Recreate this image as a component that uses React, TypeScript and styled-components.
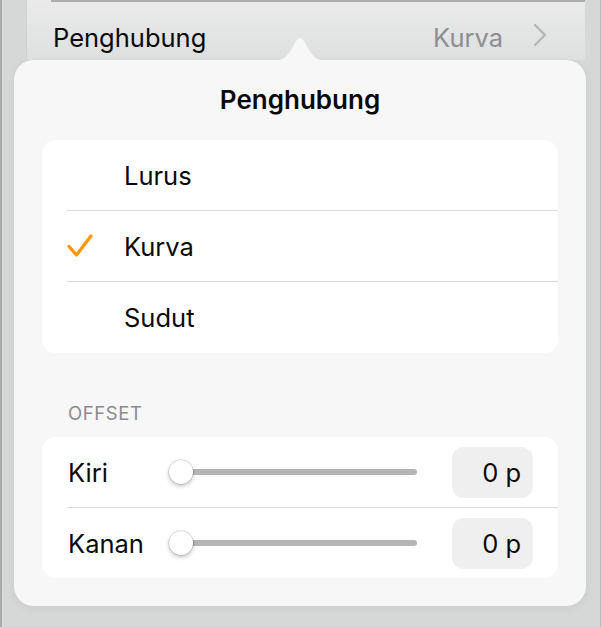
import React from "react";
import styled, { createGlobalStyle } from "styled-components";

const Global = createGlobalStyle`
  html, body { margin: 0; padding: 0; }
  body {
    background: #d6d7d7;
    font-family: Inter, "Noto Sans", Roboto, sans-serif;
    -webkit-font-smoothing: antialiased;
  }
`;

const Frame = styled.div`
  width: 601px;
  height: 627px;
  box-sizing: border-box;
  background: #d6d7d7;
  border-left: 2px solid #a9aaaa;
  border-right: 1px solid #b9baba;
  overflow: hidden;
  display: flex;
  flex-direction: column;
`;

const Sheet = styled.div`
  margin: 0 15px 0 24px;
  height: 60px;
  background: linear-gradient(#eaeaea, #dedfdf);
  border-left: 1px solid #d0d1d1;
`;

const SheetRow = styled.div`
  margin-left: 24px;
  height: 60px;
  box-sizing: border-box;
  border-top: 2px solid #acacac;
  display: flex;
  align-items: flex-start;
  padding: 21px 38px 0 2px;
  font-size: 25.5px;
  line-height: 30px;
`;

const RowLabel = styled.span`
  flex: 1;
  color: #0a0a0a;
`;

const RowValue = styled.span`
  color: #8e8e92;
  margin-right: 30px;
`;

const Popover = styled.div`
  position: relative;
  margin: 0 14px 0 12px;
  height: 546px;
  box-sizing: border-box;
  background: #f7f7f7;
  border-radius: 20px;
  padding: 24px 28px 28px 28px;
  display: flex;
  flex-direction: column;
  box-shadow: 0 2px 10px rgba(0, 0, 0, 0.06);
`;

const Arrow = styled.svg`
  position: absolute;
  top: -24px;
  left: 253px;
  width: 66px;
  height: 25px;
`;

const Title = styled.div`
  text-align: center;
  font-size: 26px;
  font-weight: 600;
  line-height: 32px;
  color: #0a0a0a;
  margin-bottom: 24px;
`;

const Card = styled.div`
  background: #ffffff;
  border-radius: 14px;
  overflow: hidden;
`;

const OptionRow = styled.div<{ $last?: boolean }>`
  margin-left: 25px;
  height: ${(p) => (p.$last ? "71px" : "70px")};
  display: flex;
  align-items: center;
  border-bottom: ${(p) => (p.$last ? "none" : "1px solid #dadada")};
`;

const CheckSlot = styled.div`
  width: 57px;
  display: flex;
  align-items: center;
`;

const OptionText = styled.span`
  font-size: 25.5px;
  color: #0a0a0a;
`;

const SectionLabel = styled.div`
  margin: 50px 0 14px 26px;
  font-size: 18.5px;
  line-height: 20px;
  color: #8a8a8e;
  letter-spacing: 0.6px;
`;

const SliderRow = styled.div<{ $last?: boolean }>`
  margin-left: 25px;
  padding-right: 25px;
  height: 70px;
  display: flex;
  align-items: center;
  border-bottom: ${(p) => (p.$last ? "none" : "1px solid #dadada")};
`;

const SliderLabel = styled.span`
  width: 102px;
  padding-left: 1px;
  box-sizing: border-box;
  font-size: 25.5px;
  color: #0a0a0a;
`;

const Track = styled.div`
  position: relative;
  width: 248px;
  height: 6px;
  border-radius: 3px;
  background: #b5b5b5;
`;

const Thumb = styled.div`
  position: absolute;
  left: 0;
  top: 50%;
  width: 24px;
  height: 24px;
  margin-top: -12px;
  border-radius: 50%;
  background: #ffffff;
  box-shadow: 0 0 0 0.5px rgba(0, 0, 0, 0.2), 0 2px 4px rgba(0, 0, 0, 0.25);
`;

const ValueBox = styled.div`
  margin-left: auto;
  width: 81px;
  height: 51px;
  box-sizing: border-box;
  border-radius: 12px;
  background: #efeff0;
  display: flex;
  align-items: center;
  justify-content: flex-end;
  padding-right: 12px;
  font-size: 25.5px;
  color: #0a0a0a;
`;

const Check = () => (
  <svg width="26" height="24" viewBox="0 0 26 24">
    <path
      d="M2 12.5 L9.5 21 L24 2"
      fill="none"
      stroke="#ff9500"
      strokeWidth="3.2"
      strokeLinecap="round"
      strokeLinejoin="round"
    />
  </svg>
);

const Chevron = () => (
  <svg width="14" height="24" viewBox="0 0 14 24">
    <path
      d="M2 2 L12 12 L2 22"
      fill="none"
      stroke="#b4b4b6"
      strokeWidth="2.2"
      strokeLinecap="round"
      strokeLinejoin="round"
    />
  </svg>
);

const options = ["Lurus", "Kurva", "Sudut"];
const selected = "Kurva";
const offsets = ["Kiri", "Kanan"];

export default function App() {
  return (
    <>
      <Global />
      <Frame>
        <Sheet>
          <SheetRow>
            <RowLabel>Penghubung</RowLabel>
            <RowValue>Kurva</RowValue>
            <Chevron />
          </SheetRow>
        </Sheet>
        <Popover>
          <Arrow viewBox="0 0 66 25">
            <path
              d="M0 25 C14 25 18 23 24 14 L29 5 C31 1 35 1 37 5 L42 14 C48 23 52 25 66 25 Z"
              fill="#f7f7f7"
            />
          </Arrow>
          <Title>Penghubung</Title>
          <Card>
            {options.map((o, i) => (
              <OptionRow key={o} $last={i === options.length - 1}>
                <CheckSlot>{o === selected && <Check />}</CheckSlot>
                <OptionText>{o}</OptionText>
              </OptionRow>
            ))}
          </Card>
          <SectionLabel>OFFSET</SectionLabel>
          <Card>
            {offsets.map((o, i) => (
              <SliderRow key={o} $last={i === offsets.length - 1}>
                <SliderLabel>{o}</SliderLabel>
                <Track>
                  <Thumb />
                </Track>
                <ValueBox>0 p</ValueBox>
              </SliderRow>
            ))}
          </Card>
        </Popover>
      </Frame>
    </>
  );
}
